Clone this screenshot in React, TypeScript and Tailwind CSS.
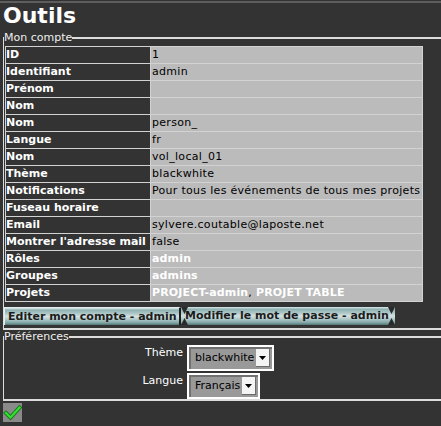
import React from "react";

type Row = { label: string; value: React.ReactNode };

const Link = ({ children }: { children: React.ReactNode }) => (
  <span className="font-bold tracking-[0.15px] text-white">{children}</span>
);

const rows: Row[] = [
  { label: "ID", value: "1" },
  { label: "Identifiant", value: "admin" },
  { label: "Prénom", value: "" },
  { label: "Nom", value: "" },
  { label: "Nom", value: "person_" },
  { label: "Langue", value: "fr" },
  { label: "Nom", value: "vol_local_01" },
  { label: "Thème", value: "blackwhite" },
  { label: "Notifications", value: "Pour tous les événements de tous mes projets" },
  { label: "Fuseau horaire", value: "" },
  { label: "Email", value: "sylvere.coutable@laposte.net" },
  { label: "Montrer l'adresse mail", value: "false" },
  { label: "Rôles", value: <Link>admin</Link> },
  { label: "Groupes", value: <Link>admins</Link> },
  {
    label: "Projets",
    value: (
      <>
        <Link>PROJECT-admin</Link>
        <span>, </span>
        <Link>PROJET TABLE</Link>
      </>
    ),
  },
];

const btnBg =
  "bg-[linear-gradient(to_bottom,#dfe9e9_0%,#8fb1b1_12%,#a9c4c4_30%,#d3e2e2_50%,#a9c4c4_70%,#7fa2a2_88%,#4f7373_100%)]";

function Select({ value }: { value: string }) {
  return (
    <div className="inline-flex h-[26px] items-center border-2 border-white bg-[#999999] pl-[6px] pr-[2px] shadow-[inset_2px_2px_0_#707070]">
      <span className="text-[11px] leading-[16px] text-black">{value}</span>
      <div className="ml-[2px] flex h-[18px] w-[14px] items-center justify-center border-r border-b border-[#6a6a6a] bg-[#f4f4f4]">
        <svg width="7" height="4" viewBox="0 0 7 4">
          <path d="M0 0 L7 0 L3.5 4 Z" fill="#000" />
        </svg>
      </div>
    </div>
  );
}

export default function App() {
  return (
    <div className="h-[426px] w-[441px] overflow-hidden bg-[#333333] font-['DejaVu_Sans',sans-serif] text-[11px]">
      <div className="mt-[1px] h-[2px] bg-[#5e5e5e]" />
      <h1 className="ml-[3px] text-[22px] font-bold leading-[26px] text-white">Outils</h1>

      <fieldset className="ml-[3px] mt-[3px] border-t-2 border-b-2 border-l border-[#dcdcdc] pb-[3px]">
        <legend className="text-[11px] leading-[12px] text-[#eeeeee]">Mon compte</legend>
        <div className="ml-[1px] mt-[2px] grid w-fit grid-cols-[144px_271px] gap-[1px] bg-[#d2d2d2] p-[1px]">
          {rows.map((r, i) => (
            <React.Fragment key={i}>
              <div className="h-[16px] whitespace-nowrap bg-[#333333] text-[11px] font-bold leading-[16px] text-white">
                {r.label}
              </div>
              <div className="h-[16px] whitespace-nowrap bg-[#bbbbbb] pl-[1px] text-[11px] leading-[16px] tracking-[0.3px] text-black">
                {r.value}
              </div>
            </React.Fragment>
          ))}
        </div>
        <div className="mt-[5px] flex">
          <div
            className={`flex h-[18px] w-[177px] items-center whitespace-nowrap border-t border-l border-[#e2eded] border-r-[#1e1e1e] border-r-2 pl-[3px] text-[11px] font-bold leading-[16px] text-[#1c1c1c] ${btnBg}`}
          >
            Editer mon compte - admin
          </div>
          <div
            className={`relative flex h-[18px] w-[214px] items-center whitespace-nowrap pl-[4px] text-[11px] font-bold leading-[16px] text-[#1c1c1c] ${btnBg}`}
          >
            <svg className="absolute left-0 top-0" width="7" height="18" viewBox="0 0 7 18">
              <path d="M0 0 L7 0 L3.5 7 Z M0 18 L7 18 L3.5 11 Z" fill="#2a2a2a" />
            </svg>
            <span className="relative">Modifier le mot de passe - admin</span>
            <svg className="absolute right-0 top-0" width="7" height="18" viewBox="0 0 7 18">
              <path d="M0 0 L7 0 L3.5 7 Z M0 18 L7 18 L3.5 11 Z" fill="#2a2a2a" />
            </svg>
          </div>
        </div>
      </fieldset>

      <fieldset className="ml-[3px] mt-[1px] border-t-2 border-b-2 border-l border-[#dcdcdc]">
        <legend className="text-[11px] leading-[12px] text-[#eeeeee]">Préférences</legend>
        <div className="grid grid-cols-[179px_auto] gap-x-[4px] gap-y-[2px] pt-[2px]">
          <div className="text-right text-[11px] leading-[16px] text-white">Thème</div>
          <div>
            <Select value="blackwhite" />
          </div>
          <div className="text-right text-[11px] leading-[16px] text-white">Langue</div>
          <div>
            <Select value="Français" />
          </div>
        </div>
      </fieldset>

      <div className="ml-[3px] mt-[2px] flex h-[19px] w-[19px] items-center justify-center bg-[#8a8a8a]">
        <svg width="19" height="19" viewBox="0 0 19 19">
          <path d="M3 10 L7.5 14.5 L16.5 4.5" fill="none" stroke="#137a13" strokeWidth="4" strokeLinecap="square" />
          <path d="M3 10 L7.5 14.5 L16.5 4.5" fill="none" stroke="#33e033" strokeWidth="2.2" strokeLinecap="square" />
        </svg>
      </div>
    </div>
  );
}
